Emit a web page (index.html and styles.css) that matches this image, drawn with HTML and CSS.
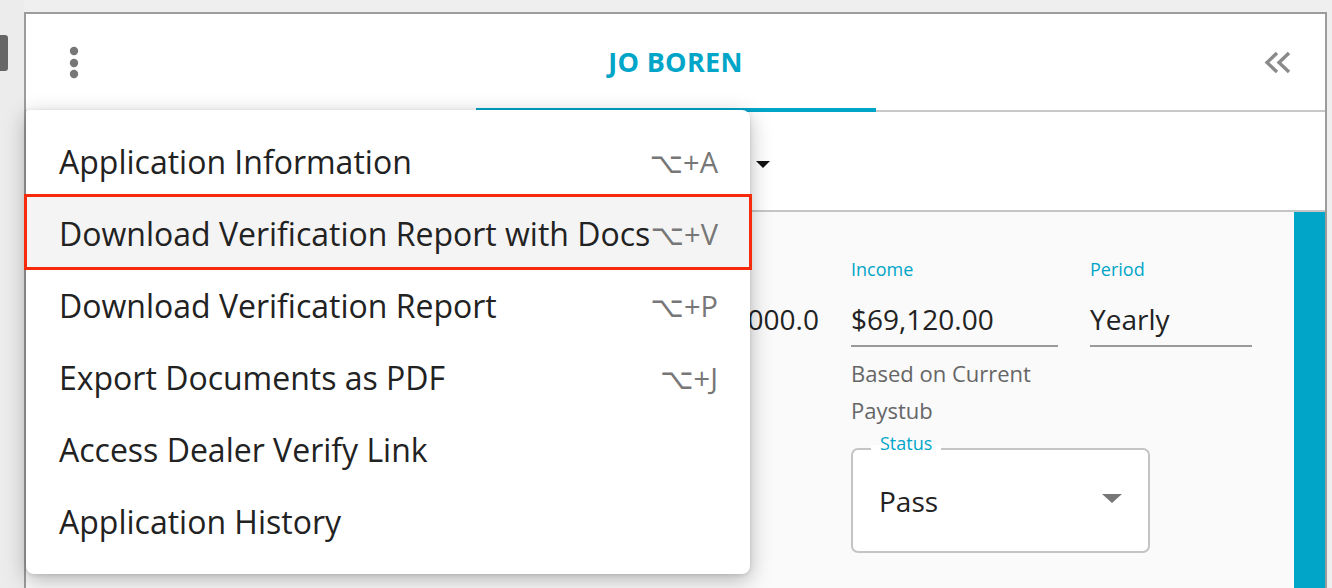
FILE: index.html
```html
<!DOCTYPE html>
<html lang="en">
<head>
<meta charset="UTF-8" />
<meta name="viewport" content="width=device-width, initial-scale=1" />
<title>Jo Boren</title>
<link rel="stylesheet" href="styles.css">
</head>
<body>
  <!-- left rail, mostly cut off -->
  <aside class="rail">
    <div class="rail-icon"></div>
  </aside>

  <main class="panel">
    <header class="panel-header">
      <button class="icon-btn" aria-label="More actions">
        <svg width="12" height="34" viewBox="0 0 12 34">
          <circle cx="6" cy="5" r="4.2" fill="#777" />
          <circle cx="6" cy="17" r="4.2" fill="#777" />
          <circle cx="6" cy="28" r="4.2" fill="#777" />
        </svg>
      </button>
      <div class="tab">JO BOREN</div>
      <button class="icon-btn" aria-label="Collapse">
        <svg width="30" height="24" viewBox="0 0 30 24">
          <polyline points="13,2 3,11.5 13,21" fill="none" stroke="#8a8a8a" stroke-width="3.4" />
          <polyline points="25,2 15,11.5 25,21" fill="none" stroke="#8a8a8a" stroke-width="3.4" />
        </svg>
      </button>
    </header>

    <div class="sub-bar">
      <span class="caret"></span>
    </div>

    <section class="content">
      <div class="fields">
        <div class="field">
          <div class="field-label">&nbsp;</div>
          <div class="field-value plain">000.0</div>
        </div>
        <div class="field">
          <div class="field-label">Income</div>
          <div class="field-value">$69,120.00</div>
          <p class="helper">Based on Current Paystub</p>
          <div class="select-box">
            <span class="select-label">Status</span>
            <span class="select-value">Pass</span>
            <span class="select-arrow"></span>
          </div>
        </div>
        <div class="field">
          <div class="field-label">Period</div>
          <div class="field-value">Yearly</div>
        </div>
      </div>
      <div class="side-bar"></div>
    </section>
  </main>

  <div class="gutter"></div>

  <!-- overflow menu, open -->
  <ul class="menu" role="menu">
    <li class="menu-item"><span>Application Information</span><span class="shortcut">⌥+A</span></li>
    <li class="menu-item active"><span>Download Verification Report with Docs</span><span class="shortcut">⌥+V</span></li>
    <li class="menu-item"><span>Download Verification Report</span><span class="shortcut">⌥+P</span></li>
    <li class="menu-item"><span>Export Documents as PDF</span><span class="shortcut">⌥+J</span></li>
    <li class="menu-item"><span>Access Dealer Verify Link</span></li>
    <li class="menu-item"><span>Application History</span></li>
  </ul>
</body>
</html>
```

FILE: styles.css
```css
* {
  margin: 0;
  padding: 0;
  box-sizing: border-box;
}
body {
  font-family: 'Open Sans', 'DejaVu Sans', sans-serif;
  background: #efefef;
  color: #222;
  display: flex;
  height: 588px;
  overflow: hidden;
}

/* Left rail */
.rail {
  width: 24px;
  flex: none;
  background: #ececec;
  position: relative;
}
.rail-icon {
  margin-top: 35px;
  width: 8px;
  height: 36px;
  background: #666;
  border-radius: 0 3px 3px 0;
}
.gutter {
  width: 5px;
  flex: none;
}

/* Panel */
.panel {
  flex: 1;
  margin-top: 12px;
  background: #fff;
  border-top: 2px solid #9c9c9c;
  border-left: 2px solid #9c9c9c;
  border-right: 2px solid #9c9c9c;
  display: flex;
  flex-direction: column;
}
.panel-header {
  height: 98px;
  display: grid;
  grid-template-columns: 1fr 400px 1fr;
  border-bottom: 2px solid #c8c8c8;
}
.icon-btn {
  width: 96px;
  border: none;
  background: none;
  display: flex;
  align-items: center;
  justify-content: center;
}
.panel-header .icon-btn:last-child {
  justify-self: end;
  width: 92px;
}
.tab {
  color: #00a5c8;
  font-weight: 700;
  font-size: 27px;
  letter-spacing: 0.3px;
  text-align: center;
  height: 98px;
  padding-top: 2px;
  border-bottom: 4px solid #00a5c8;
  line-height: 92px;
}

.sub-bar {
  height: 100px;
  border-bottom: 2px solid #c6c6c6;
  display: flex;
  align-items: center;
  padding-left: 730px;
}
.caret {
  width: 0;
  height: 0;
  border-left: 7px solid transparent;
  border-right: 7px solid transparent;
  border-top: 7px solid #111;
  margin-top: 6px;
}

/* Content */
.content {
  flex: 1;
  background: #fafafa;
  display: flex;
}
.fields {
  flex: 1;
  display: grid;
  grid-template-columns: 75px 207px 162px;
  column-gap: 32px;
  align-items: start;
  padding: 47px 0 0 718px;
}
.field-label {
  color: #00a5c8;
  font-size: 18px;
  line-height: 20px;
}
.field-value {
  font-size: 28px;
  line-height: 38px;
  margin-top: 21px;
  padding-bottom: 7px;
  border-bottom: 2px solid #9a9a9a;
  color: #222;
  white-space: nowrap;
}
.field-value.plain {
  border-bottom: none;
  text-align: right;
}
.helper {
  color: #666;
  font-size: 22px;
  line-height: 37px;
  margin-top: 8px;
}
.select-box {
  position: relative;
  width: 299px;
  height: 105px;
  margin-top: 19px;
  background: #fff;
  border: 2px solid #c4c4c4;
  border-radius: 7px;
  display: flex;
  align-items: center;
  padding-left: 26px;
}
.select-label {
  position: absolute;
  left: 18px;
  top: -18px;
  padding: 0 9px;
  background: linear-gradient(#fafafa 60%, #fff 60%);
  color: #00a5c8;
  font-size: 18px;
  line-height: 22px;
}
.select-value {
  font-size: 28px;
  flex: 1;
}
.select-arrow {
  width: 0;
  height: 0;
  border-left: 10px solid transparent;
  border-right: 10px solid transparent;
  border-top: 9px solid #777;
  margin-right: 26px;
  margin-bottom: 4px;
}
.side-bar {
  width: 31px;
  flex: none;
  background: #00a5c8;
}

/* Menu */
.menu {
  list-style: none;
  position: absolute;
  left: 26px;
  top: 110px;
  width: 724px;
  height: 464px;
  background: #fff;
  border-radius: 2px 8px 8px 8px;
  box-shadow: 0 6px 22px rgb(0 0 0 / 0.28), 0 1px 4px rgb(0 0 0 / 0.12);
  padding-top: 14px;
}
.menu-item {
  height: 72px;
  display: flex;
  align-items: center;
  justify-content: space-between;
  padding: 3px 32px 0 33px;
  font-size: 32px;
  color: #222;
  white-space: nowrap;
}
.menu-item.active {
  background: #f4f4f4;
  outline: 3px solid #f52b0c;
  outline-offset: -1px;
}
.shortcut {
  color: #777;
  font-size: 29px;
}
```
